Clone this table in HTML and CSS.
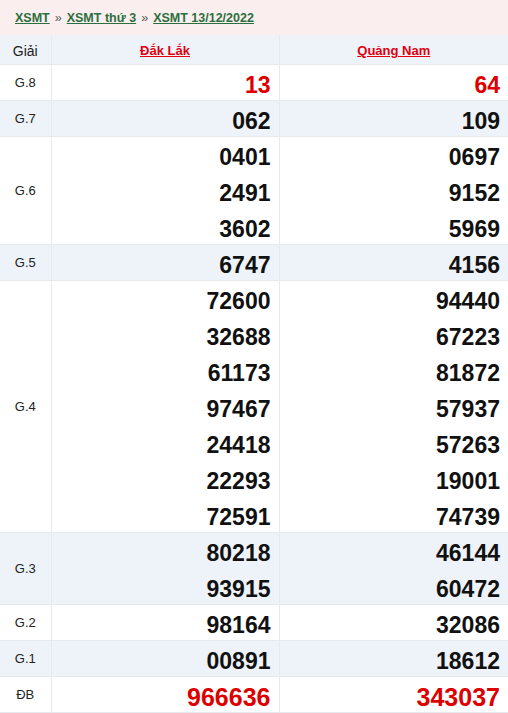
FILE: index.html
```html
<!DOCTYPE html>
<html lang="vi">
<head>
<meta charset="utf-8">
<link rel="stylesheet" href="styles.css">
</head>
<body>
<div class="crumbs">
  <a href="#">XSMT</a><span class="sep">»</span><a href="#">XSMT thứ 3</a><span class="sep">»</span><a href="#">XSMT 13/12/2022</a>
</div>
<table class="kq">
  <colgroup><col class="c1"><col class="c2"><col class="c3"></colgroup>
  <thead>
    <tr class="alt"><th class="giai">Giải</th><th><a href="#">Đắk Lắk</a></th><th><a href="#">Quảng Nam</a></th></tr>
  </thead>
  <tbody>
    <tr><td class="g">G.8</td><td><div class="n red">13</div></td><td><div class="n red">64</div></td></tr>
    <tr class="alt"><td class="g">G.7</td><td><div class="n">062</div></td><td><div class="n">109</div></td></tr>
    <tr><td class="g">G.6</td><td><div class="n">0401</div><div class="n">2491</div><div class="n">3602</div></td><td><div class="n">0697</div><div class="n">9152</div><div class="n">5969</div></td></tr>
    <tr class="alt"><td class="g">G.5</td><td><div class="n">6747</div></td><td><div class="n">4156</div></td></tr>
    <tr><td class="g">G.4</td><td><div class="n">72600</div><div class="n">32688</div><div class="n">61173</div><div class="n">97467</div><div class="n">24418</div><div class="n">22293</div><div class="n">72591</div></td><td><div class="n">94440</div><div class="n">67223</div><div class="n">81872</div><div class="n">57937</div><div class="n">57263</div><div class="n">19001</div><div class="n">74739</div></td></tr>
    <tr class="alt"><td class="g">G.3</td><td><div class="n">80218</div><div class="n">93915</div></td><td><div class="n">46144</div><div class="n">60472</div></td></tr>
    <tr><td class="g">G.2</td><td><div class="n">98164</div></td><td><div class="n">32086</div></td></tr>
    <tr class="alt"><td class="g">G.1</td><td><div class="n">00891</div></td><td><div class="n">18612</div></td></tr>
    <tr><td class="g">ĐB</td><td><div class="n red db">966636</div></td><td><div class="n red db">343037</div></td></tr>
  </tbody>
</table>
</body>
</html>
```
FILE: styles.css
```css
html, body {
  margin: 0;
  padding: 0;
  background: #fff;
  font-family: "Liberation Sans", Arial, sans-serif;
  color: #111;
}
.crumbs {
  height: 35px;
  box-sizing: border-box;
  background: #fbeeee;
  padding: 10px 0 0 15px;
  font-size: 12.5px;
  font-weight: bold;
  line-height: 16px;
}
.crumbs a {
  color: #2c6e3f;
  text-decoration: underline;
}
.crumbs .sep {
  color: #555;
  font-weight: normal;
  margin: 0 5px;
}
.kq {
  width: 508px;
  border-collapse: collapse;
  table-layout: fixed;
}
.kq col.c1 { width: 51px; }
.kq col.c2 { width: 228px; }
.kq col.c3 { width: 229px; }
.kq th, .kq td {
  padding: 0;
  border: 1px solid #e6e9ee;
}
.kq tr > :first-child { border-left: 0; }
.kq tr > :last-child { border-right: 0; }
.kq thead th {
  border-top: 0;
  height: 27px;
  padding-top: 2px;
  font-size: 13px;
  font-weight: bold;
  text-align: center;
}
.kq thead th.giai {
  font-weight: normal;
  font-size: 14px;
  color: #222;
}
.kq thead th a {
  color: #e0000f;
  text-decoration: underline;
}
.kq tr.alt { background: #eef2f9; }
.kq td.g {
  text-align: center;
  font-size: 13px;
  color: #222;
  vertical-align: middle;
}
.n {
  box-sizing: border-box;
  height: 36px;
  padding-top: 5px;
  line-height: 31px;
  text-align: right;
  padding-right: 8px;
  font-size: 23px;
  font-weight: bold;
  color: #111;
}
.n:last-child {
  height: 35px;
  line-height: 30px;
}
.n.red { color: #dd0000; }
.n.db { font-size: 25px; }
```
